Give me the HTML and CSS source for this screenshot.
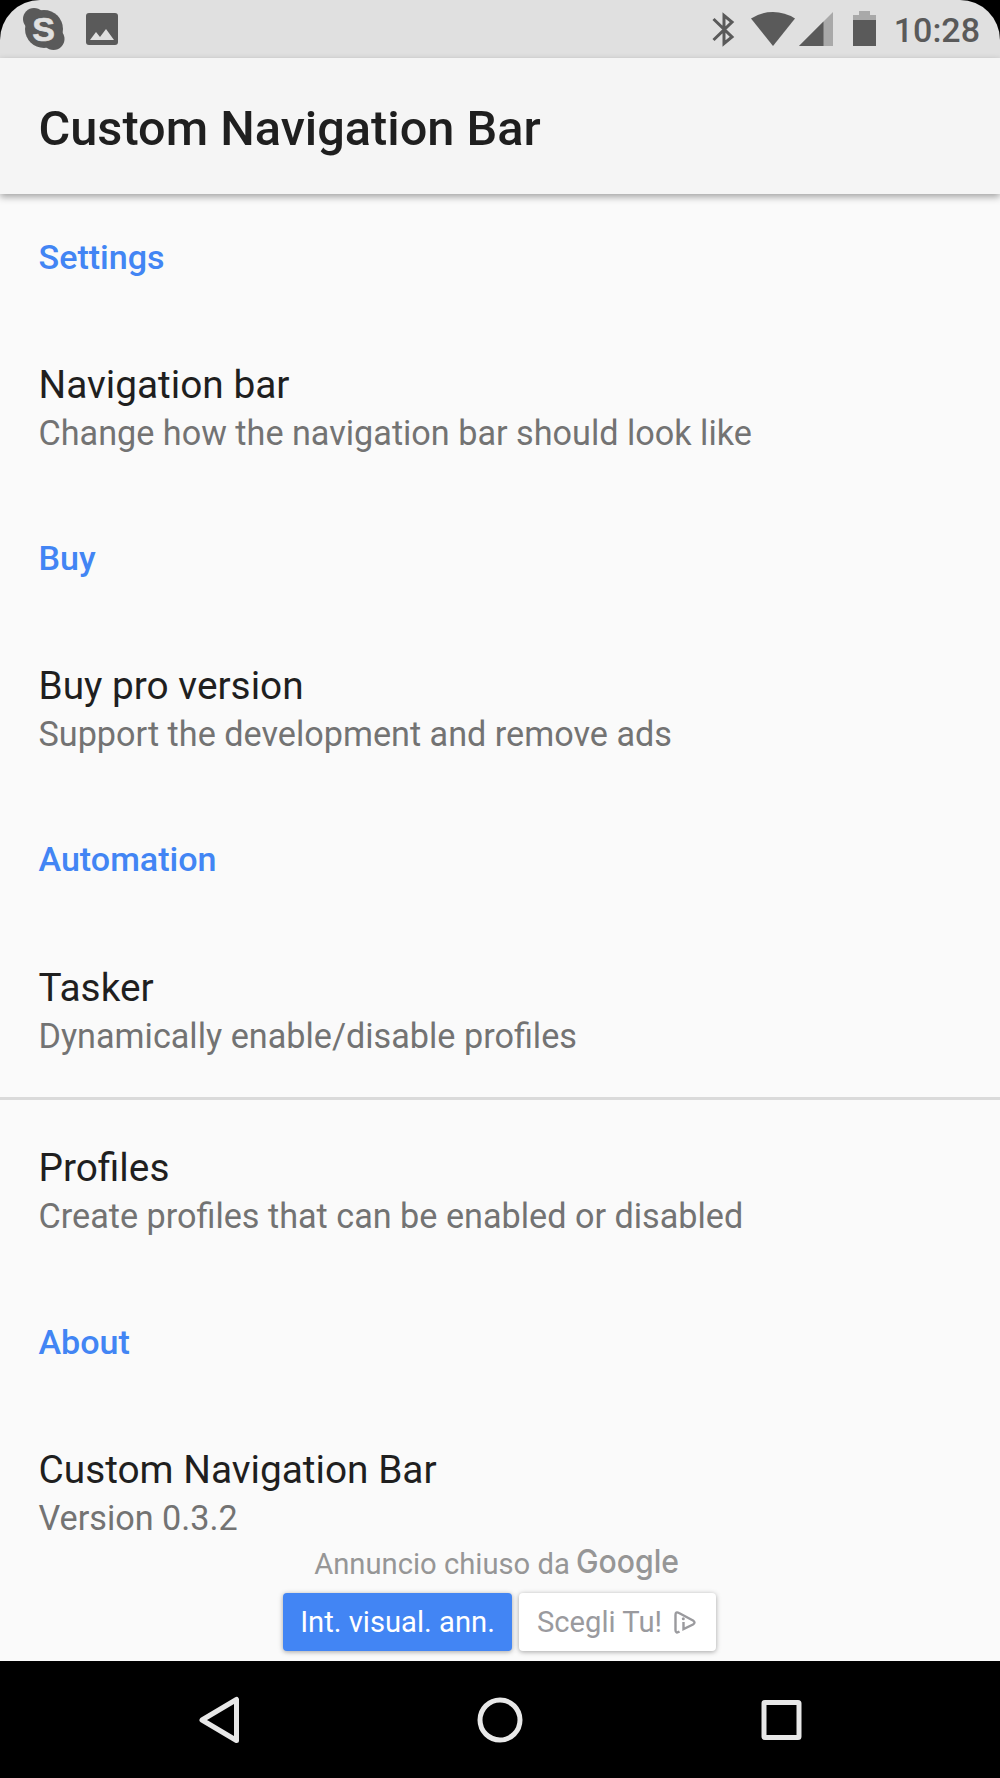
FILE: index.html
```
<!DOCTYPE html>
<html lang="en">
<head>
    <meta charset="UTF-8">
    <meta name="viewport" content="width=device-width, initial-scale=1.0">
    <title>Custom Navigation Bar</title>
    <link rel="stylesheet" href="styles.css">
</head>
<body>
    <div class="screen">
        <div class="status-frame">
            <div class="status-bar">
                <svg class="icon-skype" width="42" height="44" viewBox="0 0 42 44">
                    <g fill="#5a5a5a">
                        <circle cx="21" cy="22" r="19"/>
                        <circle cx="11" cy="12" r="11"/>
                        <circle cx="30.500" cy="32" r="11"/>
                    </g>
                    <text x="20.500" y="33.500" text-anchor="middle">S</text>
                </svg>
                <svg class="icon-image" width="32" height="32" viewBox="0 0 32 32">
                    <rect width="32" height="32" rx="3" fill="#5a5a5a"/>
                    <path d="M4 27l6-8 4 5 6-8 8 11z" fill="#e0e0e0"/>
                </svg>
                <div class="spacer"></div>
                <svg class="icon-bluetooth" width="24" height="36" viewBox="0 0 24 36">
                    <path d="M1.500 8L20 26l-8 6.500V4.500L20 11 1.500 29" fill="none" stroke="#5a5a5a" stroke-width="3"/>
                </svg>
                <svg class="icon-wifi" width="44" height="36" viewBox="0 0 44 36">
                    <path d="M22 35L0 7.500Q10 1 22 1t22 6.500z" fill="#5a5a5a"/>
                </svg>
                <svg class="icon-signal" width="34" height="34" viewBox="0 0 34 34">
                    <path d="M0 34L34 0v34z" fill="#a9a9a9"/>
                    <path d="M0 34L24.500 9.500V34z" fill="#5a5a5a"/>
                </svg>
                <svg class="icon-battery" width="23" height="35" viewBox="0 0 23 35">
                    <path d="M0 4h6V0h11v4h6v6H0z" fill="#a9a9a9"/>
                    <path d="M0 9h23v26H0z" fill="#5a5a5a"/>
                </svg>
                <span class="clock">10:28</span>
            </div>
        </div>
        <header class="toolbar">
            <h1>Custom Navigation Bar</h1>
        </header>
        <main class="preferences">
            <h2 class="category">Settings</h2>
            <div class="preference">
                <div class="title">Navigation bar</div>
                <div class="summary">Change how the navigation bar should look like</div>
            </div>
            <h2 class="category">Buy</h2>
            <div class="preference">
                <div class="title">Buy pro version</div>
                <div class="summary">Support the development and remove ads</div>
            </div>
            <h2 class="category">Automation</h2>
            <div class="preference divided">
                <div class="title">Tasker</div>
                <div class="summary">Dynamically enable/disable profiles</div>
            </div>
            <div class="preference">
                <div class="title">Profiles</div>
                <div class="summary">Create profiles that can be enabled or disabled</div>
            </div>
            <h2 class="category">About</h2>
            <div class="preference">
                <div class="title">Custom Navigation Bar</div>
                <div class="summary">Version 0.3.2</div>
            </div>
        </main>
        <div class="ad">
            <div class="ad-closed">
                <span>Annuncio chiuso da</span>
                <svg class="google" width="106" height="50" viewBox="0 0 106 50">
                    <text x="0" y="34" textLength="103" lengthAdjust="spacingAndGlyphs">Google</text>
                </svg>
            </div>
            <div class="ad-buttons">
                <button type="button" class="ad-button primary">Int. visual. ann.</button>
                <button type="button" class="ad-button">
                    Scegli Tu!
                    <svg class="adchoices" width="22" height="23" viewBox="0 0 22 23">
                        <path d="M5.500 20.500Q1.500 23 1.500 19V4Q1.500 0 5 2L19 9.500Q22 11.500 19 13.500L9.500 18V11" fill="none" stroke="#9a9a9e" stroke-width="2.400"/>
                        <circle cx="9.300" cy="7.800" r="1.500" fill="#9a9a9e"/>
                    </svg>
                </button>
            </div>
        </div>
        <nav class="nav-bar">
            <svg width="48" height="60" viewBox="0 0 48 60">
                <path d="M41.500 9.500v41L7 30z" fill="none" stroke="#e8e8e8" stroke-width="5" stroke-linejoin="round"/>
            </svg>
            <svg width="48" height="60" viewBox="0 0 48 60">
                <circle cx="24" cy="30" r="20" fill="none" stroke="#e8e8e8" stroke-width="5"/>
            </svg>
            <svg width="48" height="60" viewBox="0 0 48 60">
                <rect x="7" y="12.500" width="35" height="35" rx="1" fill="none" stroke="#e8e8e8" stroke-width="5"/>
            </svg>
        </nav>
    </div>
</body>
</html>
```
FILE: styles.css
```
* {
    box-sizing: border-box;
}

body {
    margin: 0;
    font-family: Roboto, sans-serif;
    background-color: #fafafa;
    color: #1f1f1f;
}

svg {
    display: block;
    flex-shrink: 0;
}

.screen {
    display: flex;
    flex-direction: column;
    width: 1000px;
    height: 1778px;
    overflow: hidden;
}

/* Status bar */
.status-frame {
    background-color: #000;
}

.status-bar {
    display: flex;
    align-items: flex-start;
    height: 58px;
    padding: 0 20px 0 23px;
    background-color: #e0e0e0;
    border-radius: 40px 40px 0 0;
}

.spacer {
    flex: 1;
}

.icon-skype {
    margin-top: 7px;
}

.icon-skype text {
    font: bold 34px "Liberation Sans", sans-serif;
    fill: #e0e0e0;
    stroke: #e0e0e0;
    stroke-width: 0.6px;
}

.icon-image {
    margin: 13px 0 0 21px;
}

.icon-bluetooth {
    margin: 11px 15px 0 0;
}

.icon-wifi {
    margin: 11px 4px 0 0;
}

.icon-signal {
    margin: 12px 20px 0 0;
}

.icon-battery {
    margin: 11px 18px 0 0;
}

.clock {
    font-size: 34px;
    font-weight: 500;
    line-height: 60px;
    color: #5a5a5a;
}

/* Toolbar */
.toolbar {
    position: relative;
    height: 136px;
    padding: 0 38.5px;
    background-color: #f5f5f5;
    box-shadow: 0 3px 7px rgba(0, 0, 0, 0.35);
}

h1 {
    margin: 0;
    font-size: 48.7px;
    font-weight: 500;
    line-height: 142px;
}

/* Preference list */
.preferences {
    flex: none;
    height: 1345px;
}

.category {
    height: 122px;
    margin: 0;
    padding: 43px 38.5px 0;
    font-size: 34.1px;
    font-weight: 500;
    line-height: 40px;
    color: #4285f4;
}

.preference {
    height: 179px;
    padding: 46px 38.5px 0;
}

.preference.divided {
    height: 182px;
    padding-top: 47px;
    border-bottom: 3px solid #dadada;
}

.preference.divided + .preference {
    padding-top: 45px;
}

.title {
    font-size: 38.8px;
    line-height: 46px;
}

.summary {
    margin-top: 5px;
    font-size: 34.2px;
    line-height: 41px;
    color: #737373;
}

/* Closed ad */
.ad {
    display: flex;
    flex-direction: column;
    align-items: center;
    height: 122px;
}

.ad-closed {
    display: flex;
    align-items: center;
    gap: 6px;
    height: 50px;
    margin-right: 4px;
    font-size: 29.2px;
    line-height: 33px;
    color: #969696;
}

.google {
    overflow: visible;
}

.google text {
    font: 500 33px Inter, sans-serif;
    fill: #969696;
}

.ad-buttons {
    display: flex;
    gap: 7px;
    margin: 4px 1px 0 0;
}

.ad-button {
    display: flex;
    align-items: center;
    justify-content: center;
    gap: 12px;
    width: 197px;
    height: 58px;
    padding: 0 2px 0 0;
    border: none;
    border-radius: 4px;
    background-color: #fff;
    box-shadow: 0 1px 5px rgba(0, 0, 0, 0.35);
    color: #9a9a9e;
    font-family: inherit;
    font-size: 29.2px;
    white-space: nowrap;
}

.ad-button.primary {
    width: 229px;
    padding: 0;
    background-color: #4285f4;
    color: #fff;
}

/* Navigation bar */
.nav-bar {
    display: flex;
    justify-content: center;
    align-items: center;
    gap: 233px;
    height: 117px;
    background-color: #000;
}
```
